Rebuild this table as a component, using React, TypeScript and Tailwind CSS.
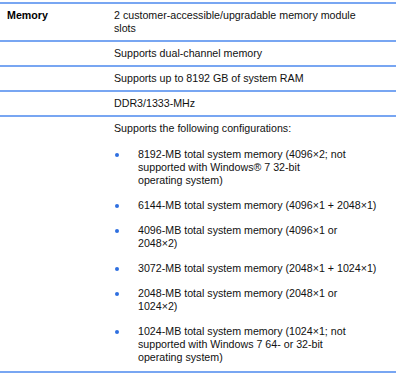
const configs = [
  ['8192-MB total system memory (4096×2; not', 'supported with Windows® 7 32-bit', 'operating system)'],
  ['6144-MB total system memory (4096×1 + 2048×1)'],
  ['4096-MB total system memory (4096×1 or', '2048×2)'],
  ['3072-MB total system memory (2048×1 + 1024×1)'],
  ['2048-MB total system memory (2048×1 or', '1024×2)'],
  ['1024-MB total system memory (1024×1; not', 'supported with Windows 7 64- or 32-bit', 'operating system)'],
];

function Row({ label, children }: { label?: string; children: React.ReactNode }) {
  return (
    <div className="flex border-t-2 border-[#78a6f2]">
      <div className="w-[108px] shrink-0 pl-[7px] pt-[5px] font-bold text-black">{label}</div>
      <div className="flex-1 pl-[6px] pt-[5px] pb-[5px]">{children}</div>
    </div>
  );
}

export default function App() {
  return (
    <div className="bg-white w-[396px] h-[379px] pt-[2px] text-[10.67px] leading-[13px] text-[#111] [font-family:'Liberation_Sans',Arial,sans-serif]">
      <div className="border-b-2 border-[#78a6f2]">
        <Row label="Memory">
          <div>2 customer-accessible/upgradable memory module</div>
          <div>slots</div>
        </Row>
        <Row>Supports dual-channel memory</Row>
        <Row>Supports up to 8192 GB of system RAM</Row>
        <Row>DDR3/1333-MHz</Row>
        <Row>
          <div>Supports the following configurations:</div>
          <ul className="mt-[13px] flex flex-col gap-[12px] pb-[2px]">
            {configs.map((lines, i) => (
              <li key={i} className="flex">
                <span className="w-[24px] shrink-0 flex pt-[5px] pl-[1px]">
                  <span className="w-[4px] h-[4px] rounded-full bg-[#2f6fe0]" />
                </span>
                <span className="whitespace-nowrap">
                  {lines.map((l, j) => (
                    <div key={j}>{l}</div>
                  ))}
                </span>
              </li>
            ))}
          </ul>
        </Row>
      </div>
    </div>
  );
}
